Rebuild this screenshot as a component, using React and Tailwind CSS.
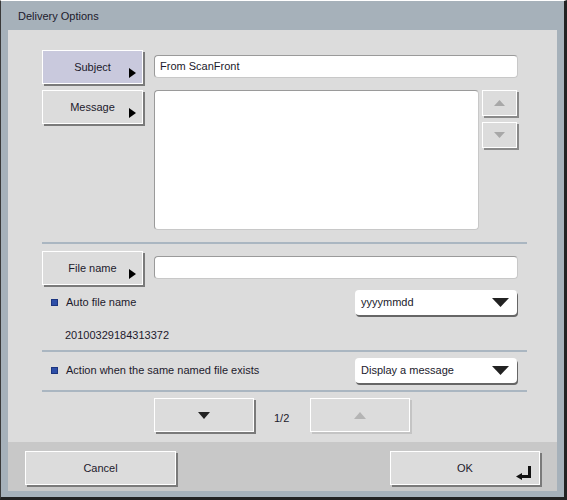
import React from "react";

const F = { fontFamily: '"Liberation Sans", Arial, sans-serif' };

function RightTri() {
  return (
    <svg width="7" height="10" viewBox="0 0 7 10" className="absolute right-[6px] bottom-[5px]">
      <polygon points="0,0 7,5 0,10" fill="#000" />
    </svg>
  );
}

function SideButton({ label, lavender }) {
  return (
    <div
      className={`relative w-[101px] h-[34px] shrink-0 border border-white shadow-[2px_2px_0_#7a7a7a] flex items-center justify-center text-[11px] text-[#1c1a2c] ${
        lavender ? "bg-[#c9c9dd]" : "bg-[#dcdcdc]"
      }`}
    >
      <span>{label}</span>
      <RightTri />
    </div>
  );
}

function Dropdown({ label }) {
  return (
    <div className="w-[162px] h-[25px] bg-white rounded-[4px] shadow-[1px_2px_0_#666] flex items-center justify-between pl-[6px] pr-[8px] text-[11px] text-[#1c1a2c]">
      <span>{label}</span>
      <svg width="17" height="9" viewBox="0 0 17 9">
        <polygon points="0,0 17,0 8.5,9" fill="#222" />
      </svg>
    </div>
  );
}

function Sep() {
  return <div className="h-[2px] bg-[#aab6c1] w-full" />;
}

function Bullet() {
  return <div className="w-[7px] h-[7px] bg-[#2e4fa8] border border-[#1c3580] shrink-0" />;
}

export default function App() {
  return (
    <div
      style={F}
      className="w-[567px] h-[500px] bg-[#a6b1ba] border-t border-t-white border-l border-l-[#3a3a3a] border-r-[3px] border-r-[#222] border-b-[3px] border-b-[#222] flex flex-col"
    >
      <div className="h-[29px] flex items-center pl-[17px] pt-[2px] text-[11px] text-[#1c1a2c]">
        Delivery Options
      </div>
      <div className="mx-[7px] flex flex-col">
        <div className="h-[412px] bg-[#dcdcdc] pl-[34px] pr-[30px] pt-[20px] flex flex-col">
          {/* Subject */}
          <div className="flex">
            <SideButton label="Subject" lavender />
            <div className="ml-[11px] mt-[5px] w-[364px] h-[23px] bg-white border border-[#9a9a9a] border-b-[#c8c8c8] border-r-[#c8c8c8] rounded-[4px] flex items-center pl-[5px] text-[11px] text-[#1c1a2c]">
              From ScanFront
            </div>
          </div>
          {/* Message */}
          <div className="flex mt-[6px]">
            <SideButton label="Message" />
            <div className="ml-[11px] w-[325px] h-[140px] bg-white border border-[#9a9a9a] border-b-[#c8c8c8] border-r-[#c8c8c8] rounded-[4px]" />
            <div className="ml-[3px] flex flex-col gap-[6px]">
              <div className="w-[35px] h-[26px] border border-white shadow-[2px_2px_0_#8a8a8a] flex items-center justify-center">
                <svg width="11" height="6" viewBox="0 0 11 6">
                  <polygon points="0,6 11,6 5.5,0" fill="#a8a8a8" />
                </svg>
              </div>
              <div className="w-[35px] h-[26px] border border-white shadow-[2px_2px_0_#8a8a8a] flex items-center justify-center">
                <svg width="11" height="6" viewBox="0 0 11 6">
                  <polygon points="0,0 11,0 5.5,6" fill="#a8a8a8" />
                </svg>
              </div>
            </div>
          </div>
          <div className="mt-[12px]">
            <Sep />
          </div>
          {/* File name */}
          <div className="flex mt-[7px]">
            <SideButton label="File name" />
            <div className="ml-[11px] mt-[5px] w-[364px] h-[23px] bg-white border border-[#9a9a9a] border-b-[#c8c8c8] border-r-[#c8c8c8] rounded-[4px]" />
          </div>
          <div className="flex items-center mt-[5px] h-[25px]">
            <div className="ml-[9px]">
              <Bullet />
            </div>
            <span className="ml-[8px] text-[11px] text-[#1c1a2c] flex-1">Auto file name</span>
            <Dropdown label="yyyymmdd" />
            <div className="w-[10px]" />
          </div>
          <div className="ml-[23px] mt-[13px] text-[11px] text-[#1c1a2c] h-[14px] leading-[14px]">
            20100329184313372
          </div>
          <div className="mt-[8px]">
            <Sep />
          </div>
          <div className="flex items-center mt-[5px] h-[26px]">
            <div className="ml-[9px]">
              <Bullet />
            </div>
            <span className="ml-[8px] text-[11px] text-[#1c1a2c] flex-1">
              Action when the same named file exists
            </span>
            <Dropdown label="Display a message" />
            <div className="w-[10px]" />
          </div>
          <div className="mt-[7px]">
            <Sep />
          </div>
          <div className="flex items-center mt-[6px] ml-[112px]">
            <div className="w-[100px] h-[34px] border border-white shadow-[2px_2px_0_#7a7a7a] flex items-center justify-center">
              <svg width="12" height="7" viewBox="0 0 12 7">
                <polygon points="0,0 12,0 6,7" fill="#222" />
              </svg>
            </div>
            <span className="ml-[20px] w-[36px] mt-[6px] text-[11px] text-[#1c1a2c]">1/2</span>
            <div className="w-[100px] h-[34px] border border-white shadow-[2px_2px_0_#c4c4c4] flex items-center justify-center">
              <svg width="12" height="7" viewBox="0 0 12 7">
                <polygon points="0,7 12,7 6,0" fill="#b4b4b4" />
              </svg>
            </div>
          </div>
        </div>
        <div className="h-[49px] bg-[#c8c8c8] flex items-start pt-[9px] pl-[17px]">
          <div className="w-[151px] h-[34px] bg-[#dcdcdc] border border-white shadow-[2px_2px_0_#7a7a7a] flex items-center justify-center text-[11px] text-[#1c1a2c]">
            Cancel
          </div>
          <div className="relative ml-[214px] w-[150px] h-[34px] bg-[#dcdcdc] border border-white shadow-[2px_2px_0_#7a7a7a] flex items-center justify-center text-[11px] text-[#1c1a2c]">
            OK
            <svg width="16" height="14" viewBox="0 0 16 14" className="absolute right-[7px] bottom-[4px]">
              <polygon points="12,0 15,0 15,12 6,12 6,14 0,10.5 6,7 6,9 12,9" fill="#111" />
            </svg>
          </div>
        </div>
      </div>
    </div>
  );
}
